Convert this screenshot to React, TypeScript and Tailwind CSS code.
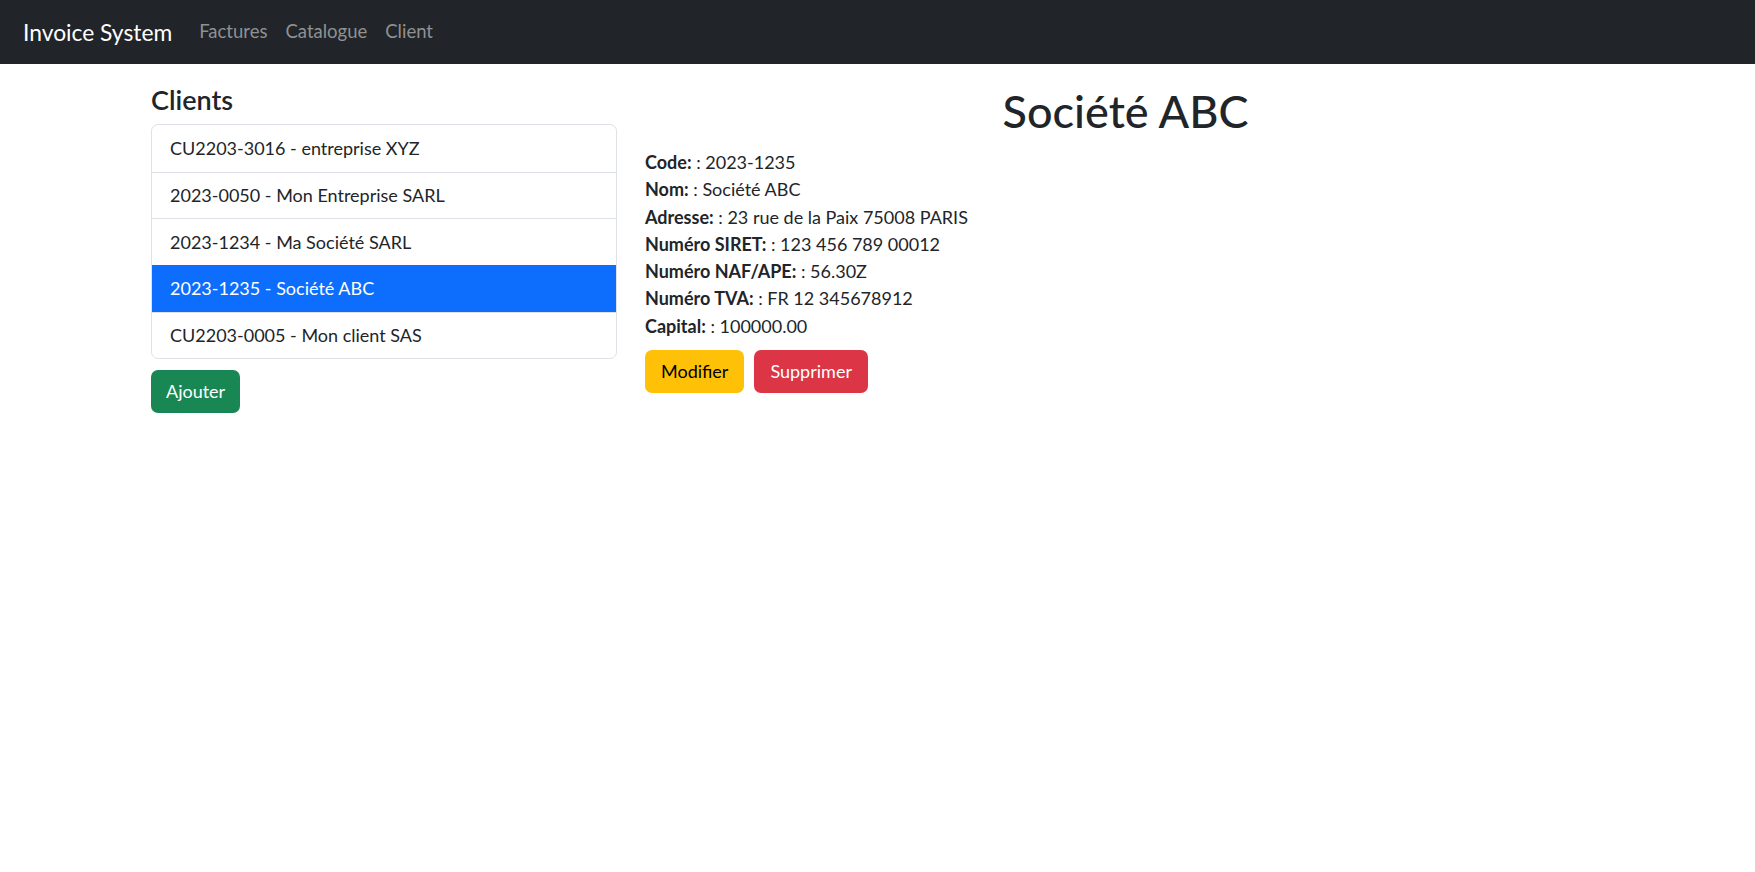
import React from 'react'

const clients = [
  { code: 'CU2203-3016', name: 'entreprise XYZ' },
  { code: '2023-0050', name: 'Mon Entreprise SARL' },
  { code: '2023-1234', name: 'Ma Société SARL' },
  { code: '2023-1235', name: 'Société ABC' },
  { code: 'CU2203-0005', name: 'Mon client SAS' },
]

const details = [
  { label: 'Code:', value: '2023-1235' },
  { label: 'Nom:', value: 'Société ABC' },
  { label: 'Adresse:', value: '23 rue de la Paix 75008 PARIS' },
  { label: 'Numéro SIRET:', value: '123 456 789 00012' },
  { label: 'Numéro NAF/APE:', value: '56.30Z' },
  { label: 'Numéro TVA:', value: 'FR 12 345678912' },
  { label: 'Capital:', value: '100000.00' },
]

export default function App() {
  const selected = '2023-1235'

  return (
    <div className="min-h-screen bg-white text-[#212529] font-['Lato','Liberation_Sans',sans-serif]">
      <nav className="h-16 bg-[#212529] flex items-center px-[23px]">
        <a className="text-white text-[22.8px] mr-[18px]">Invoice System</a>
        <div className="flex text-[18.5px] text-[#8f9193]">
          <a className="px-[9px]">Factures</a>
          <a className="px-[9px]">Catalogue</a>
          <a className="px-[9px]">Client</a>
        </div>
      </nav>

      <main className="flex pl-[151px] pt-5">
        {/* liste des clients */}
        <div className="w-[466px]">
          <h3 className="text-[27px] font-semibold leading-[31px] mb-[9px]">Clients</h3>
          <ul className="border border-[#dee2e6] rounded-[7px] overflow-hidden">
            {clients.map((c, i) => (
              <li
                key={c.code}
                className={
                  c.code === selected
                    ? 'h-[46.7px] flex items-center px-[18px] text-[18px] bg-[#0d6efd] text-white'
                    : 'h-[46.7px] flex items-center px-[18px] text-[18px] ' + (i > 0 ? 'border-t border-[#dee2e6]' : '')
                }
              >
                {c.code} - {c.name}
              </li>
            ))}
          </ul>
          <button className="mt-[11px] h-[43px] px-[15px] rounded-[7px] bg-[#198754] text-white text-[18px]">
            Ajouter
          </button>
        </div>

        {/* fiche client */}
        <div className="ml-[28px] w-[961px]">
          <h1 className="text-center text-[45px] font-medium leading-[53px] mt-[1px] mb-[11px]">Société ABC</h1>
          <div className="text-[18px] leading-[27.3px]">
            {details.map((d) => (
              <div key={d.label}>
                <span className="font-bold">{d.label}</span> : {d.value}
              </div>
            ))}
          </div>
          <div className="flex gap-[10px] mt-[10px]">
            <button className="h-[43px] px-[16px] rounded-[7px] bg-[#ffc107] text-black text-[18px]">Modifier</button>
            <button className="h-[43px] px-[16px] rounded-[7px] bg-[#dc3545] text-white text-[18px]">Supprimer</button>
          </div>
        </div>
      </main>
    </div>
  )
}
